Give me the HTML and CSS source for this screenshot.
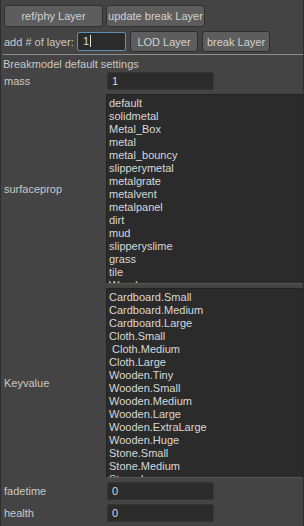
FILE: index.html
```html
<!DOCTYPE html>
<html lang="en">
<head>
  <meta charset="UTF-8" />
  <title>Breakmodel</title>
  <link rel="stylesheet" href="styles.css">
</head>
<body>
  <div class="window">
    <div class="btn-row">
      <button type="button" class="btn btn-wide">ref/phy Layer</button>
      <button type="button" class="btn btn-wide">update break Layer</button>
    </div>
    <div class="btn-row layer-row">
      <label class="layer-label">add # of layer:</label>
      <div class="field layer-field">1<span class="caret"></span></div>
      <button type="button" class="btn btn-small">LOD Layer</button>
      <button type="button" class="btn btn-small">break Layer</button>
    </div>
    <div class="divider"></div>
    <div class="section-title">Breakmodel default settings</div>

    <div class="settings">
      <label class="row-label">mass</label>
      <input type="text" class="field value-field" value="1" />

      <label class="row-label">surfaceprop</label>
      <div class="list">
        <div class="item">default</div>
        <div class="item">solidmetal</div>
        <div class="item">Metal_Box</div>
        <div class="item">metal</div>
        <div class="item">metal_bouncy</div>
        <div class="item">slipperymetal</div>
        <div class="item">metalgrate</div>
        <div class="item">metalvent</div>
        <div class="item">metalpanel</div>
        <div class="item">dirt</div>
        <div class="item">mud</div>
        <div class="item">slipperyslime</div>
        <div class="item">grass</div>
        <div class="item">tile</div>
        <div class="item">Wood</div>
      </div>

      <label class="row-label">Keyvalue</label>
      <div class="list">
        <div class="item">Cardboard.Small</div>
        <div class="item">Cardboard.Medium</div>
        <div class="item">Cardboard.Large</div>
        <div class="item">Cloth.Small</div>
        <div class="item">&nbsp;Cloth.Medium</div>
        <div class="item">Cloth.Large</div>
        <div class="item">Wooden.Tiny</div>
        <div class="item">Wooden.Small</div>
        <div class="item">Wooden.Medium</div>
        <div class="item">Wooden.Large</div>
        <div class="item">Wooden.ExtraLarge</div>
        <div class="item">Wooden.Huge</div>
        <div class="item">Stone.Small</div>
        <div class="item">Stone.Medium</div>
        <div class="item">Stone.Large</div>
      </div>

      <label class="row-label">fadetime</label>
      <input type="text" class="field value-field" value="0" />

      <label class="row-label">health</label>
      <input type="text" class="field value-field" value="0" />
    </div>
  </div>
</body>
</html>
```

FILE: styles.css
```css
html, body {
  margin: 0;
  padding: 0;
  background-color: #444444;
}
body {
  font-family: "Liberation Sans", Arial, sans-serif;
  font-size: 11px;
  color: #c8c8c8;
}
.window {
  width: 304px;
  height: 526px;
  box-sizing: border-box;
  border-left: 1px solid #2e2e2e;
  border-right: 1px solid #2e2e2e;
  padding-top: 5px;
  overflow: hidden;
}

/* Button rows */
.btn-row {
  display: flex;
  align-items: center;
  gap: 3px;
  padding-left: 3px;
}
.layer-row {
  margin-top: 4px;
  gap: 0;
}
.btn {
  height: 22px;
  background-color: #5d5d5d;
  color: #d2d2d2;
  border: 1px solid #2f2f2f;
  border-radius: 3px;
  font-family: inherit;
  font-size: 11px;
  padding: 0;
  cursor: pointer;
}
.btn:hover {
  background-color: #676767;
}
.btn-wide {
  width: 99px;
}
.btn-small {
  width: 68px;
  height: 21px;
  margin-left: 4px;
}
.layer-label {
  width: 73px;
}

/* Fields */
.field {
  box-sizing: border-box;
  background-color: #2b2b2b;
  color: #d8d8d8;
  border: 1px solid #353535;
  border-radius: 2px;
  font-family: inherit;
  font-size: 11px;
  padding: 0 4px;
  outline: none;
}
.layer-field {
  width: 49px;
  height: 19px;
  line-height: 17px;
  border-color: #5f8fb4;
  padding-left: 5px;
}
.caret {
  display: inline-block;
  width: 1px;
  height: 12px;
  margin-left: 1px;
  vertical-align: -2px;
  background-color: #e0e0e0;
}
.value-field {
  width: 107px;
  height: 18px;
  margin-left: 1px;
}

.divider {
  height: 1px;
  margin: 2px 0 0 2px;
  background-color: #8d8d8d;
}
.section-title {
  line-height: 13px;
  margin: 3px 0 1px 2px;
}

/* Settings grid */
.settings {
  display: grid;
  grid-template-columns: 105px 1fr;
  row-gap: 4px;
  align-items: center;
}
.row-label {
  padding-left: 3px;
}
.list {
  height: 190px;
  box-sizing: border-box;
  background-color: #2b2b2b;
  border: 1px solid #232323;
  border-bottom-color: #575757;
  padding: 2px 2px;
  overflow: hidden;
}
.item {
  line-height: 13px;
  color: #d8d8d8;
  white-space: nowrap;
}
```
